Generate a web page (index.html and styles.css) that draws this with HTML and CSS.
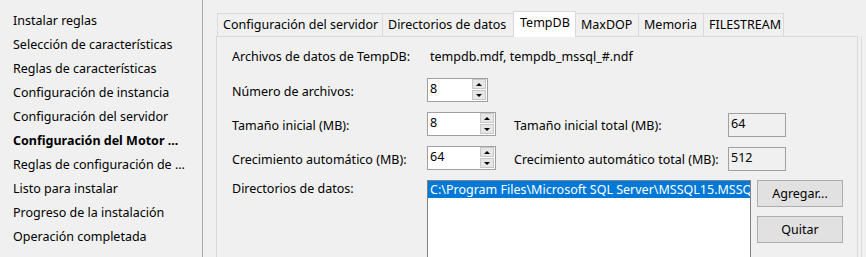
FILE: index.html
```html
<!DOCTYPE html>
<html lang="es">
<head>
<meta charset="utf-8">
<title>Configuración del Motor de base de datos</title>
<link rel="stylesheet" href="styles.css">
</head>
<body>
<div class="app">
  <nav class="sidebar">
    <div class="step">Instalar reglas</div>
    <div class="step">Selección de características</div>
    <div class="step">Reglas de características</div>
    <div class="step">Configuración de instancia</div>
    <div class="step">Configuración del servidor</div>
    <div class="step current">Configuración del Motor ...</div>
    <div class="step">Reglas de configuración de ...</div>
    <div class="step">Listo para instalar</div>
    <div class="step">Progreso de la instalación</div>
    <div class="step">Operación completada</div>
  </nav>
  <main class="main">
    <div class="tabcontrol">
      <div class="tabs">
        <div class="tab t-server">Configuración del servidor</div>
        <div class="tab t-dirs">Directorios de datos</div>
        <div class="tab t-tempdb selected">TempDB</div>
        <div class="tab t-maxdop">MaxDOP</div>
        <div class="tab t-mem">Memoria</div>
        <div class="tab t-fs last">FILESTREAM</div>
      </div>
      <div class="panel">
        <div class="row r-info">
          <div class="lbl">Archivos de datos de TempDB:</div>
          <div class="value">tempdb.mdf, tempdb_mssql_#.ndf</div>
        </div>
        <div class="row">
          <div class="lbl">Número de archivos:</div>
          <div class="spinner narrow">
            <span class="spin-text">8</span>
            <span class="spin-btns">
              <span class="spin-btn"><span class="tri up"></span></span>
              <span class="spin-btn"><span class="tri down"></span></span>
            </span>
          </div>
        </div>
        <div class="row">
          <div class="lbl">Tamaño inicial (MB):</div>
          <div class="spinner">
            <span class="spin-text">8</span>
            <span class="spin-btns">
              <span class="spin-btn"><span class="tri up"></span></span>
              <span class="spin-btn"><span class="tri down"></span></span>
            </span>
          </div>
          <div class="lbl2">Tamaño inicial total (MB):</div>
          <div class="ro-box">64</div>
        </div>
        <div class="row">
          <div class="lbl">Crecimiento automático (MB):</div>
          <div class="spinner">
            <span class="spin-text">64</span>
            <span class="spin-btns">
              <span class="spin-btn"><span class="tri up"></span></span>
              <span class="spin-btn"><span class="tri down"></span></span>
            </span>
          </div>
          <div class="lbl2">Crecimiento automático total (MB):</div>
          <div class="ro-box">512</div>
        </div>
        <div class="row r-dirs">
          <div class="lbl lbl-top">Directorios de datos:</div>
          <div class="listbox">
            <div class="list-item sel"><span class="item-text">C:\Program Files\Microsoft SQL Server\MSSQL15.MSSQLSERVER\MSSQL\Data</span></div>
          </div>
          <div class="btns">
            <button class="btn">Agregar...</button>
            <button class="btn">Quitar</button>
          </div>
        </div>
      </div>
    </div>
    <div class="edge"></div>
  </main>
</div>
</body>
</html>
```

FILE: styles.css
```css
html, body {
  margin: 0;
  padding: 0;
  background: #f0f0f0;
}
body {
  width: 866px;
  height: 257px;
  overflow: hidden;
  font-family: "Noto Sans", "Open Sans", sans-serif;
  font-size: 12.5px;
  color: #000;
}
.app {
  display: flex;
  height: 257px;
}
.sidebar {
  border-right: 1px solid #a8a8a8;
  padding-top: 9px;
  padding-left: 13px;
  box-sizing: border-box;
  width: 203px;
  flex: none;
}
.step {
  height: 24px;
  line-height: 24px;
  white-space: nowrap;
}
.step.current {
  font-weight: bold;
}
.main {
  display: flex;
  padding-left: 13px;
  padding-top: 11px;
  flex: 1;
}
.tabcontrol {
  width: 642px;
  flex: none;
}
.tabs {
  display: flex;
  align-items: flex-end;
  height: 25px;
  margin-left: 1px;
}
.tab {
  box-sizing: border-box;
  height: 23px;
  border-top: 1px solid #d9d9d9;
  border-left: 1px solid #d9d9d9;
  background: #f0f0f0;
  padding-left: 5px;
  line-height: 21px;
  white-space: nowrap;
}
.tab.last {
  border-right: 1px solid #d9d9d9;
}
.tab.selected {
  height: 26px;
  margin-bottom: -1px;
  background: #fff;
  border-right: 1px solid #d9d9d9;
  position: relative;
  z-index: 1;
  line-height: 22px;
}
.selected + .tab {
  border-left: none;
}
.t-server { width: 165px; }
.t-dirs { width: 131px; }
.t-tempdb { width: 63px; padding-left: 6px; }
.t-maxdop { width: 62px; }
.t-mem { width: 65px; }
.t-fs { width: 81px; }

.panel {
  box-sizing: border-box;
  height: 240px;
  border: 1px solid #d9d9d9;
  background: #f0f0f0;
  padding-top: 7px;
  padding-left: 15px;
}
.row {
  display: flex;
  height: 24px;
  margin-bottom: 10px;
}
.lbl {
  width: 195px;
  flex: none;
  line-height: 24px;
  padding-top: 2px;
  box-sizing: border-box;
  white-space: nowrap;
}
.r-info .lbl {
  padding-top: 1px;
}
.value {
  padding-left: 3px;
  line-height: 24px;
  padding-top: 1px;
  white-space: nowrap;
}
.spinner {
  box-sizing: border-box;
  width: 69px;
  height: 24px;
  border: 1px solid #a0a0a0;
  background: #fff;
  display: flex;
  justify-content: space-between;
  flex: none;
}
.spinner.narrow {
  width: 61px;
}
.spin-text {
  padding-left: 2px;
  line-height: 19px;
}
.spin-btns {
  display: flex;
  flex-direction: column;
  gap: 1px;
  margin: 0 1px;
}
.spin-btn {
  box-sizing: border-box;
  width: 14px;
  height: 10px;
  border: 1px solid #c8c8c8;
  background: #e6e6e6;
  display: flex;
  align-items: center;
  justify-content: center;
}
.tri {
  width: 0;
  height: 0;
  border-left: 3px solid transparent;
  border-right: 3px solid transparent;
}
.tri.up {
  border-bottom: 3px solid #000;
}
.tri.down {
  border-top: 3px solid #000;
}
.lbl2 {
  margin-left: 18px;
  width: 214px;
  flex: none;
  line-height: 24px;
  padding-top: 2px;
  box-sizing: border-box;
  white-space: nowrap;
}
.ro-box {
  box-sizing: border-box;
  width: 58px;
  height: 24px;
  margin-top: 1px;
  border: 1px solid #a0a0a0;
  background: #f0f0f0;
  padding-left: 2px;
  line-height: 20px;
  flex: none;
}
.r-dirs {
  height: 100px;
}
.lbl-top {
  line-height: 20px;
  padding-top: 0;
  margin-top: -1px;
}
.listbox {
  box-sizing: border-box;
  width: 324px;
  height: 100px;
  border: 1px solid #828282;
  background: #fff;
  overflow: hidden;
  flex: none;
}
.list-item {
  height: 17px;
  line-height: 17px;
  padding-left: 2px;
  white-space: nowrap;
  overflow: hidden;
}
.item-text {
  display: block;
  overflow: hidden;
  text-overflow: clip;
}
.list-item.sel {
  background: #0078d7;
  color: #fff;
}
.btns {
  display: flex;
  flex-direction: column;
  gap: 9px;
  margin-left: 6px;
}
.btn {
  box-sizing: border-box;
  width: 86px;
  height: 27px;
  border: 1px solid #adadad;
  background: #e1e1e1;
  font-family: inherit;
  font-size: 12.5px;
  color: #000;
  padding: 0;
  margin: 0;
}
.edge {
  width: 1px;
  height: 240px;
  margin-left: 3px;
  margin-top: 25px;
  background: #dedede;
}
```
